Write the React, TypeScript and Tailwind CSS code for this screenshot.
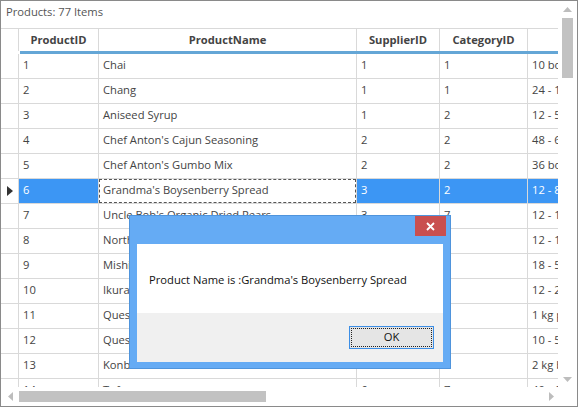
import React from 'react';

type Product = { id: number; name: string; supplier: number; category: number; qty: string };

const products: Product[] = [
  { id: 1, name: 'Chai', supplier: 1, category: 1, qty: '10 boxes x 20 bags' },
  { id: 2, name: 'Chang', supplier: 1, category: 1, qty: '24 - 12 oz bottles' },
  { id: 3, name: 'Aniseed Syrup', supplier: 1, category: 2, qty: '12 - 550 ml bottles' },
  { id: 4, name: "Chef Anton's Cajun Seasoning", supplier: 2, category: 2, qty: '48 - 6 oz jars' },
  { id: 5, name: "Chef Anton's Gumbo Mix", supplier: 2, category: 2, qty: '36 boxes' },
  { id: 6, name: "Grandma's Boysenberry Spread", supplier: 3, category: 2, qty: '12 - 8 oz jars' },
  { id: 7, name: "Uncle Bob's Organic Dried Pears", supplier: 3, category: 7, qty: '12 - 1 lb pkgs.' },
  { id: 8, name: 'Northwoods Cranberry Sauce', supplier: 3, category: 2, qty: '12 - 12 oz jars' },
  { id: 9, name: 'Mishi Kobe Niku', supplier: 4, category: 6, qty: '18 - 500 g pkgs.' },
  { id: 10, name: 'Ikura', supplier: 4, category: 8, qty: '12 - 200 ml jars' },
  { id: 11, name: 'Queso Cabrales', supplier: 5, category: 4, qty: '1 kg pkg.' },
  { id: 12, name: 'Queso Manchego La Pastora', supplier: 5, category: 4, qty: '10 - 500 g pkgs.' },
  { id: 13, name: 'Konbu', supplier: 6, category: 8, qty: '2 kg box' },
  { id: 14, name: 'Tofu', supplier: 6, category: 7, qty: '40 - 100 g pkgs.' },
];

const SELECTED = 6;

function Row({ p }: { p: Product }) {
  const sel = p.id === SELECTED;
  const cell = 'h-[25px] shrink-0 border-r border-b border-[#d9d9d9] pl-[4px] pb-[1px] flex items-center whitespace-nowrap overflow-hidden';
  const selCls = sel ? 'bg-[#3c96f4] text-white' : 'text-[#444]';
  return (
    <div className="flex">
      <div className="w-[18px] h-[25px] shrink-0 border-r border-b border-[#d9d9d9] flex items-center justify-center">
        {sel && (
          <svg width="6" height="10" viewBox="0 0 6 10">
            <path d="M0 0 L6 5 L0 10 Z" fill="#333" />
          </svg>
        )}
      </div>
      <div className={`${cell} w-[80px] ${selCls}`}>{p.id}</div>
      {sel ? (
        <div className={`${cell} w-[258px] text-[#444] relative`}>
          <div className="absolute inset-0 border border-dashed border-[#555]" />
          {p.name}
        </div>
      ) : (
        <div className={`${cell} w-[258px] text-[#444]`}>{p.name}</div>
      )}
      <div className={`${cell} w-[83px] ${selCls}`}>{p.supplier}</div>
      <div className={`${cell} w-[88px] ${selCls}`}>{p.category}</div>
      <div className={`${cell} w-[120px] ${selCls}`}>{p.qty}</div>
    </div>
  );
}

function Dialog() {
  return (
    <div className="absolute left-[128px] top-[214px] w-[322px] h-[154px] bg-[#65abf4] border border-[#4f94dc] flex flex-col">
      <div className="h-[28px] shrink-0 flex justify-end pr-[4px]">
        <div className="w-[31px] h-[20px] bg-[#c94f4f] flex items-center justify-center">
          <svg width="9" height="9" viewBox="0 0 9 9">
            <path d="M1 1 L8 8 M8 1 L1 8" stroke="#fff" strokeWidth="1.8" />
          </svg>
        </div>
      </div>
      <div className="flex-1 mx-[7px] mb-[6px] bg-white flex flex-col">
        <div className="h-[69px] flex items-center pl-[12px] pt-[3px] text-[#111]">
          Product Name is :Grandma's Boysenberry Spread
        </div>
        <div className="flex-1 bg-[#f0f0f0] flex justify-end pr-[9px] pt-[13px]">
          <div className="w-[85px] h-[23px] border border-[#3c8ee6] bg-[#e5e5e5] p-[1px]">
            <div className="w-full h-full border border-dotted border-[#222] flex items-center justify-center text-[#111]">
              OK
            </div>
          </div>
        </div>
      </div>
    </div>
  );
}

export default function App() {
  return (
    <div
      className="relative w-[578px] h-[407px] border border-[#8a8a8a] bg-white flex flex-col text-[11.2px] overflow-hidden"
      style={{ fontFamily: '"Open Sans", "Noto Sans", sans-serif' }}
    >
      <div className="flex h-[386px] shrink-0">
        <div className="w-[557px] overflow-hidden flex flex-col">
          <div className="h-[28px] shrink-0 border-b border-[#d9d9d9] pl-[5px] pb-[4px] flex items-center text-[#555]">
            Products: 77 Items
          </div>
          <div className="flex h-[22px] shrink-0 font-bold text-[#444]">
            <div className="w-[18px] shrink-0 border-r border-[#d9d9d9]" />
            <div className="w-[80px] shrink-0 border-r border-[#d9d9d9] flex items-center justify-center">ProductID</div>
            <div className="w-[258px] shrink-0 border-r border-[#d9d9d9] flex items-center justify-center">ProductName</div>
            <div className="w-[83px] shrink-0 border-r border-[#d9d9d9] flex items-center justify-center">SupplierID</div>
            <div className="w-[88px] shrink-0 border-r border-[#d9d9d9] flex items-center justify-center">CategoryID</div>
            <div className="w-[120px] shrink-0" />
          </div>
          <div className="flex h-[3px] shrink-0">
            <div className="w-[19px] shrink-0" />
            <div className="flex-1 bg-[#64a6d6]" />
          </div>
          {products.map((p) => (
            <Row key={p.id} p={p} />
          ))}
        </div>
        <div className="w-[19px] shrink-0 flex flex-col items-center pt-[6px]">
          <svg width="9" height="5" viewBox="0 0 9 5">
            <path d="M0 5 L4.5 0 L9 5 Z" fill="#bdbdbd" />
          </svg>
          <div className="w-[11px] h-[60px] bg-[#c2c2c2] mt-[6px]" />
          <div className="flex-1" />
          <svg width="9" height="5" viewBox="0 0 9 5" className="mb-[5px]">
            <path d="M0 0 L4.5 5 L9 0 Z" fill="#bdbdbd" />
          </svg>
        </div>
      </div>
      <div className="h-[19px] flex items-center w-[557px]">
        <div className="w-[18px] flex justify-center">
          <svg width="5" height="9" viewBox="0 0 5 9">
            <path d="M5 0 L0 4.5 L5 9 Z" fill="#bdbdbd" />
          </svg>
        </div>
        <div className="w-[247px] h-[11px] bg-[#c2c2c2]" />
        <div className="flex-1" />
        <div className="w-[14px] flex justify-center">
          <svg width="5" height="9" viewBox="0 0 5 9">
            <path d="M0 0 L5 4.5 L0 9 Z" fill="#bdbdbd" />
          </svg>
        </div>
      </div>
      <Dialog />
    </div>
  );
}
